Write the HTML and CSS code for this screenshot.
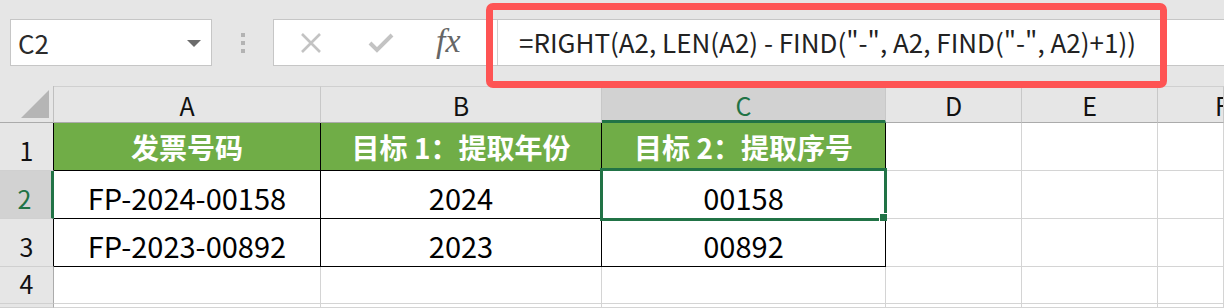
FILE: index.html
```html
<!DOCTYPE html>
<html lang="zh-CN">
<head>
    <meta charset="UTF-8">
    <title>提取序号</title>
    <link rel="stylesheet" href="styles.css">
</head>
<body>
    <!-- Formula bar -->
    <div class="toolbar">
        <div class="name-box">
            <span>C2</span>
            <span class="caret"></span>
        </div>
        <div class="grip"><i></i><i></i><i></i></div>
        <div class="formula-bar">
            <div class="fx-buttons">
                <svg width="22" height="22" viewBox="0 0 22 22"><path d="M2 2 L20 20 M20 2 L2 20" stroke="#c3c3c3" stroke-width="2.6" fill="none"/></svg>
                <svg width="26" height="22" viewBox="0 0 26 22"><path d="M2 11 L9 18 L24 3" stroke="#c3c3c3" stroke-width="4" fill="none"/></svg>
                <span class="fx">fx</span>
            </div>
            <div class="formula">=RIGHT(A2, LEN(A2) - FIND("-", A2, FIND("-", A2)+1))</div>
        </div>
    </div>

    <!-- Sheet grid -->
    <div class="sheet">
        <div class="corner"><svg width="30" height="30" viewBox="0 0 30 30"><polygon points="29,1 29,29 1,29" fill="#b5b5b5"/></svg></div>
        <div class="col-head">A</div>
        <div class="col-head">B</div>
        <div class="col-head sel">C</div>
        <div class="col-head">D</div>
        <div class="col-head">E</div>
        <div class="col-head last">F</div>

        <div class="row-head edge">1</div>
        <div class="cell th">发票号码</div>
        <div class="cell th">目标 1：提取年份</div>
        <div class="cell th">目标 2：提取序号</div>
        <div class="cell"></div>
        <div class="cell"></div>
        <div class="cell"></div>

        <div class="row-head sel">2</div>
        <div class="cell data">FP-2024-00158</div>
        <div class="cell data">2024</div>
        <div class="cell data active">00158<span class="handle"></span></div>
        <div class="cell"></div>
        <div class="cell"></div>
        <div class="cell"></div>

        <div class="row-head edge">3</div>
        <div class="cell data">FP-2023-00892</div>
        <div class="cell data">2023</div>
        <div class="cell data">00892</div>
        <div class="cell"></div>
        <div class="cell"></div>
        <div class="cell"></div>

        <div class="row-head">4</div>
        <div class="cell"></div>
        <div class="cell"></div>
        <div class="cell"></div>
        <div class="cell"></div>
        <div class="cell"></div>
        <div class="cell"></div>

        <div class="row-head"></div>
        <div class="cell"></div>
        <div class="cell"></div>
        <div class="cell"></div>
        <div class="cell"></div>
        <div class="cell"></div>
        <div class="cell"></div>
    </div>

    <!-- Red highlight around the formula -->
    <div class="highlight"></div>
</body>
</html>
```

FILE: styles.css
```css
/* Basic Reset */
* {
    margin: 0;
    padding: 0;
    box-sizing: border-box;
}

body {
    width: 1224px;
    height: 308px;
    overflow: hidden;
    background: #e6e6e6;
    color: #000;
    font-family: "Noto Sans CJK SC", "Noto Sans", sans-serif;
    position: relative;
}

/* Toolbar / formula bar */
.toolbar {
    height: 86px;
    display: flex;
    align-items: center;
    padding-left: 10px;
    padding-bottom: 1px;
}

.name-box {
    width: 202px;
    height: 47px;
    background: #fff;
    border: 1px solid #c6c6c6;
    display: flex;
    align-items: center;
    justify-content: space-between;
    padding: 0 10px 0 7px;
    font-size: 26px;
    color: #2b2b2b;
}

.caret {
    width: 0;
    height: 0;
    border-left: 7px solid transparent;
    border-right: 7px solid transparent;
    border-top: 7px solid #6b6b6b;
    margin-top: 2px;
}

.grip {
    width: 61px;
    display: flex;
    flex-direction: column;
    align-items: center;
    gap: 4px;
}

.grip i {
    width: 4px;
    height: 4px;
    background: #b3b3b3;
}

.formula-bar {
    flex: 1;
    height: 47px;
    display: flex;
    background: #fff;
    border: 1px solid #c6c6c6;
    border-right: none;
}

.fx-buttons {
    width: 223px;
    display: flex;
    align-items: center;
    padding-left: 26px;
    gap: 46px;
}

.fx {
    font-family: "Liberation Serif", serif;
    font-style: italic;
    font-size: 34px;
    color: #666;
    margin-left: -4px;
    margin-top: -4px;
}

.formula {
    flex: 1;
    border-left: 1px solid #d0d0d0;
    padding-left: 21px;
    font-size: 26px;
    line-height: 44px;
    color: #222;
    white-space: nowrap;
}

/* Sheet grid */
.sheet {
    display: grid;
    grid-template-columns: 54px 267px 281px 284px 136px 136px 66px;
    grid-template-rows: 37px 48px 48px 48px 37px 4px;
    background: #fff;
}

.corner,
.col-head,
.row-head {
    background: #e6e6e6;
    display: flex;
    align-items: center;
    justify-content: center;
    font-size: 25px;
    color: #111;
}

.corner {
    border-right: 1px solid #bfbfbf;
    border-bottom: 1px solid #ababab;
    align-items: flex-start;
    justify-content: flex-end;
    padding: 3px 3px 0 0;
}

.col-head {
    border-top: 1px solid #d0d0d0;
    border-right: 1px solid #c8c8c8;
    border-bottom: 1px solid #ababab;
    padding-top: 1px;
}

.col-head.last {
    justify-content: flex-start;
    padding-left: 57px;
    overflow: hidden;
}

.col-head.sel {
    background: #d2d2d2;
    color: #217346;
    border-bottom: 3px solid #217346;
    padding-top: 3px;
}

.row-head {
    border-right: 1px solid #ababab;
    border-bottom: 1px solid #d0d0d0;
    align-items: flex-end;
    padding-bottom: 2px;
}

.row-head.edge {
    border-right-color: #000;
}

.row-head.sel {
    background: #d2d2d2;
    color: #217346;
    border-right: 3px solid #217346;
    padding-right: 2px;
}

.cell {
    border-right: 1px solid #d4d4d4;
    border-bottom: 1px solid #d4d4d4;
    display: flex;
    align-items: center;
    justify-content: center;
    font-size: 29px;
    white-space: nowrap;
}

.cell.th {
    background: #70ad47;
    color: #fff;
    font-weight: bold;
    font-size: 28px;
    border-right-color: #000;
    border-bottom-color: #000;
}

.cell.data {
    border-right-color: #000;
    border-bottom-color: #000;
    padding-top: 4px;
}

/* Active cell frame */
.cell.active {
    position: relative;
}

.cell.active::after {
    content: "";
    position: absolute;
    left: -2px;
    right: -2px;
    top: -3px;
    bottom: -3px;
    border: 3px solid #217346;
}

.handle {
    position: absolute;
    right: -2px;
    bottom: -3px;
    width: 8px;
    height: 8px;
    background: #217346;
    border-top: 1px solid #fff;
    border-left: 1px solid #fff;
    z-index: 1;
}

/* Annotation box */
.highlight {
    position: absolute;
    left: 486px;
    top: 3px;
    width: 681px;
    height: 85px;
    border: 7px solid #fe5454;
    border-radius: 7px;
}
```
